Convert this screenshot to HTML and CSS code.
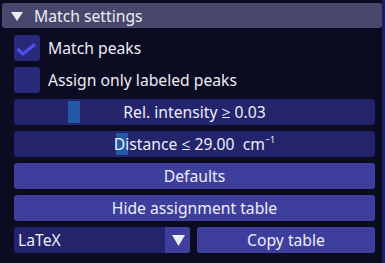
FILE: index.html
```html
<!DOCTYPE html>
<html>
<head>
<meta charset="utf-8">
<link rel="stylesheet" href="styles.css">
</head>
<body>
<div class="window">
  <div class="header">
    <svg class="tri" width="12" height="9" viewBox="0 0 12 9"><polygon points="0,0 12,0 6,9" fill="#ececf4"/></svg>
    <span>Match settings</span>
  </div>
  <div class="content">
    <div class="row check-row">
      <div class="checkbox">
        <svg width="26" height="26" viewBox="0 0 26 26"><polyline points="3.5,14 8.8,19 21,9.2" fill="none" stroke="#4d4df5" stroke-width="3.2"/></svg>
      </div>
      <span class="label">Match peaks</span>
    </div>
    <div class="row check-row">
      <div class="checkbox"></div>
      <span class="label">Assign only labeled peaks</span>
    </div>
    <div class="row slider">
      <div class="grab" style="left:54px"></div>
      <span class="stext">Rel. intensity ≥ 0.03</span>
    </div>
    <div class="row slider">
      <div class="grab" style="left:102px"></div>
      <span class="stext">Distance ≤ 29.00&nbsp; cm<sup>−1</sup></span>
    </div>
    <div class="row button">Defaults</div>
    <div class="row button">Hide assignment table</div>
    <div class="row split">
      <div class="combo">
        <span class="ctext">LaTeX</span>
        <div class="carrow"><svg width="13" height="11" viewBox="0 0 13 11"><polygon points="0,0 13,0 6.5,11" fill="#ececf4"/></svg></div>
      </div>
      <div class="button copy">Copy table</div>
    </div>
  </div>
</div>
</body>
</html>
```
FILE: styles.css
```css
html, body {
  margin: 0;
  padding: 0;
  background: #0b0b22;
}
.window {
  width: 382px;
  height: 263px;
  background: #0b0b22;
  border-right: 3px solid #1e1e5e;
  display: flex;
  flex-direction: column;
  font-family: "Noto Sans", "Open Sans", sans-serif;
  font-size: 15.7px;
  color: #ececf4;
}
.header {
  margin: 3px 0 0 2px;
  height: 25px;
  width: 380px;
  background: #48486c;
  border-radius: 3px;
  display: flex;
  align-items: center;
  box-sizing: border-box;
  padding-left: 9px;
}
.tri {
  margin-right: 11px;
  margin-top: 1px;
}
.content {
  display: flex;
  flex-direction: column;
  gap: 6px;
  padding: 7px 0 0 14px;
  width: 361px;
}
.row {
  height: 26px;
  display: flex;
  align-items: center;
}
.check-row {
  gap: 8px;
}
.checkbox {
  width: 26px;
  height: 26px;
  background: #29297a;
  border-radius: 3px;
}
.checkbox svg {
  display: block;
}
.slider {
  position: relative;
  background: #24246c;
  border-radius: 3px;
  justify-content: center;
}
.grab {
  position: absolute;
  top: 2px;
  width: 12px;
  height: 22px;
  background: #2457a6;
  border-radius: 1px;
}
.stext {
  position: relative;
}
.stext sup {
  font-size: 9px;
  vertical-align: 7px;
  line-height: 0;
}
.button {
  background: #3e3e9c;
  border-radius: 3px;
  justify-content: center;
}
.split {
  gap: 7px;
}
.combo {
  width: 176px;
  height: 26px;
  background: #24246c;
  border-radius: 3px;
  display: flex;
  align-items: center;
  overflow: hidden;
}
.ctext {
  flex: 1;
  padding-left: 4px;
}
.carrow {
  width: 25px;
  height: 26px;
  background: #3e3e9c;
  display: flex;
  align-items: center;
  justify-content: center;
}
.carrow svg {
  display: block;
  margin-left: 1px;
}
.copy {
  width: 178px;
  height: 26px;
  display: flex;
  align-items: center;
}
```
